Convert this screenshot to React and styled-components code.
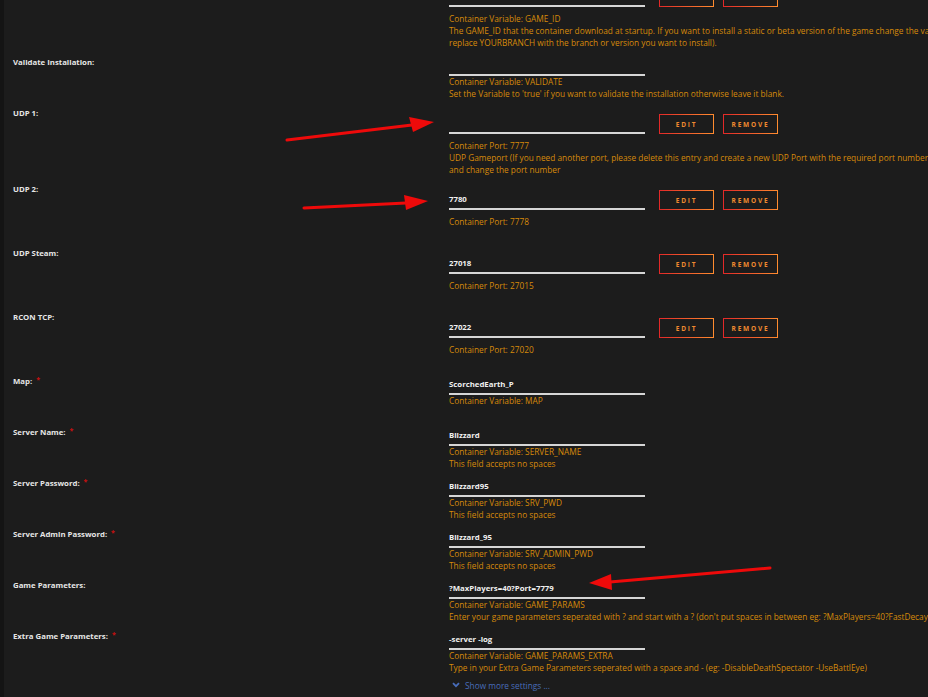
import React from 'react'
import styled, {createGlobalStyle} from 'styled-components'

const GlobalStyle = createGlobalStyle`
  html, body {
    margin: 0;
    padding: 0;
    background: #1c1c1c;
    overflow: hidden;
  }
  body {
    font-family: 'Open Sans', 'Noto Sans', sans-serif;
  }
`

const rows = [
  {
    label: 'Game ID',
    value: '376030',
    port: true,
    info: [
      'Container Variable: GAME_ID',
      "The GAME_ID that the container download at startup. If you want to install a static or beta version of the game change the value to: '376030 -beta YOURBRANCH' (without quotes and",
      'replace YOURBRANCH with the branch or version you want to install).'
    ]
  },
  {
    label: 'Validate Installation:',
    value: '',
    info: [
      'Container Variable: VALIDATE',
      "Set the Variable to 'true' if you want to validate the installation otherwise leave it blank."
    ]
  },
  {
    label: 'UDP 1:',
    value: '',
    port: true,
    info: [
      'Container Port: 7777',
      'UDP Gameport (If you need another port, please delete this entry and create a new UDP Port with the required port number, also keep in mind to edit the Game Parameters',
      'and change the port number'
    ]
  },
  {label: 'UDP 2:', value: '7780', port: true, info: ['Container Port: 7778']},
  {label: 'UDP Steam:', value: '27018', port: true, info: ['Container Port: 27015']},
  {label: 'RCON TCP:', value: '27022', port: true, info: ['Container Port: 27020']},
  {label: 'Map:', required: true, value: 'ScorchedEarth_P', info: ['Container Variable: MAP']},
  {
    label: 'Server Name:',
    required: true,
    value: 'Blizzard',
    info: ['Container Variable: SERVER_NAME', 'This field accepts no spaces']
  },
  {
    label: 'Server Password:',
    required: true,
    value: 'Blizzard95',
    info: ['Container Variable: SRV_PWD', 'This field accepts no spaces']
  },
  {
    label: 'Server Admin Password:',
    required: true,
    value: 'Blizzard_95',
    info: ['Container Variable: SRV_ADMIN_PWD', 'This field accepts no spaces']
  },
  {
    label: 'Game Parameters:',
    value: '?MaxPlayers=40?Port=7779',
    info: [
      'Container Variable: GAME_PARAMS',
      "Enter your game parameters seperated with ? and start with a ? (don't put spaces in between eg: ?MaxPlayers=40?FastDecayUnsnappedCoreStructures=true)"
    ]
  },
  {
    label: 'Extra Game Parameters:',
    required: true,
    value: '-server -log',
    info: [
      'Container Variable: GAME_PARAMS_EXTRA',
      'Type in your Extra Game Parameters seperated with a space and - (eg: -DisableDeathSpectator -UseBattlEye)'
    ]
  }
]

export default function App() {
  return (
    <Page>
      <GlobalStyle />
      <Form>
        {rows.map((row, i) => (
          <Row key={i}>
            <Label>
              {row.label}
              {row.required && <Required>*</Required>}
            </Label>
            <Field>
              {row.port ? (
                <Controls>
                  <Input>{row.value}</Input>
                  <Button>Edit</Button>
                  <Button>Remove</Button>
                </Controls>
              ) : (
                <Input $plain>{row.value}</Input>
              )}
              <Info $port={row.port}>
                {row.info.map((line, j) => (
                  <div key={j}>{line}</div>
                ))}
              </Info>
            </Field>
          </Row>
        ))}
        <ShowMore>
          <svg width="8" height="6" viewBox="0 0 8 6">
            <path d="M1 1.2 L4 4.2 L7 1.2" fill="none" stroke="#486dba" strokeWidth="1.8" />
          </svg>
          Show more settings ...
        </ShowMore>
      </Form>
      <Arrows width="928" height="697" viewBox="0 0 928 697">
        <g stroke="#ee0a0a" strokeWidth="3" strokeLinecap="round" fill="#ee0a0a">
          <line x1="287" y1="140" x2="412" y2="125" />
          <polygon points="409,117 413,132 434,122" stroke="none" />
          <line x1="304" y1="208" x2="406" y2="203" />
          <polygon points="404,195 406,210 428,201" stroke="none" />
          <line x1="770" y1="568" x2="610" y2="582" />
          <polygon points="611,574 612,590 589,583" stroke="none" />
        </g>
      </Arrows>
    </Page>
  )
}

const Page = styled.div`
  position: relative;
  height: 697px;
  overflow: hidden;
  border-left: 4px solid #141414;
  background: #1c1c1c;
`

const Form = styled.div`
  margin-top: -20px;
`

const Row = styled.div`
  display: grid;
  grid-template-columns: 436px 1fr;
  align-items: start;
  padding-left: 9px;
  margin-bottom: 7px;
`

const Label = styled.div`
  height: 12px;
  font-size: 7.8px;
  font-weight: 700;
  line-height: 12px;
  color: #e6e6e6;
  white-space: nowrap;
`

const Required = styled.span`
  color: #c81010;
  font-size: 7px;
  line-height: 0;
  position: relative;
  top: -2px;
  margin-left: 4px;
`

const Field = styled.div`
  min-width: 0;
`

const Controls = styled.div`
  display: flex;
  align-items: flex-end;
  margin-top: 7px;
`

const Input = styled.div`
  box-sizing: border-box;
  width: 196px;
  height: 20px;
  padding-top: ${p => (p.$plain ? '1px' : '0')};
  line-height: ${p => (p.$plain ? '17px' : '18px')};
  font-size: 7.8px;
  font-weight: 700;
  color: #f0f0f0;
  border-bottom: 2px solid #d6d6d6;
  white-space: nowrap;
`

const Button = styled.button`
  box-sizing: border-box;
  width: 55px;
  height: 20px;
  margin-left: 14px;
  padding: 0;
  border: 1px solid transparent;
  background: linear-gradient(#1c1c1c, #1c1c1c) padding-box,
    linear-gradient(90deg, #e22828, #ff8c2f) border-box;
  color: #f08a30;
  font-family: 'Open Sans', sans-serif;
  font-size: 6.5px;
  font-weight: 700;
  letter-spacing: 1.8px;
  text-transform: uppercase;

  & + & {
    margin-left: 9px;
  }
`

const Info = styled.div`
  margin-top: ${p => (p.$port ? '6px' : '0')};
  min-height: 24px;
  font-size: 8.3px;
  line-height: 12px;
  color: #d68a0a;
  white-space: nowrap;
`

const ShowMore = styled.div`
  display: flex;
  align-items: center;
  gap: 5px;
  margin-top: -2px;
  padding-left: 448px;
  height: 12px;
  font-size: 8.3px;
  color: #486dba;
`

const Arrows = styled.svg`
  position: absolute;
  left: -4px;
  top: 0;
  pointer-events: none;
`
